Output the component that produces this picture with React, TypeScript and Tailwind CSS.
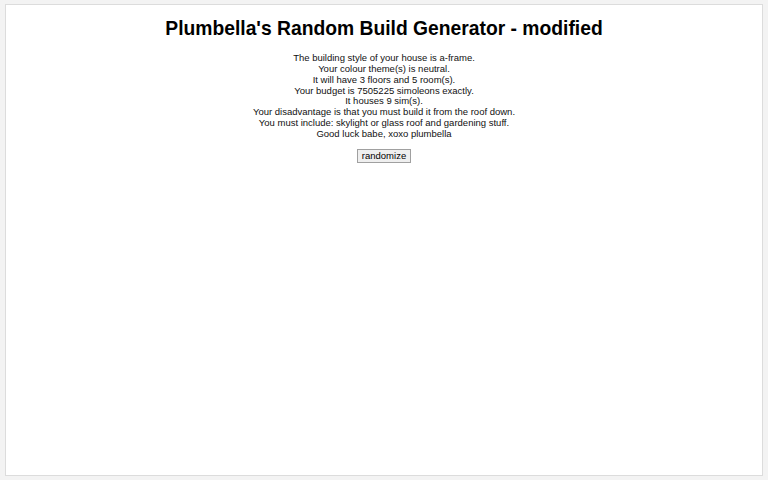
export default function App() {
  const lines = [
    'The building style of your house is a-frame.',
    'Your colour theme(s) is neutral.',
    'It will have 3 floors and 5 room(s).',
    'Your budget is 7505225 simoleons exactly.',
    'It houses 9 sim(s).',
    'Your disadvantage is that you must build it from the roof down.',
    'You must include: skylight or glass roof and gardening stuff.',
    'Good luck babe, xoxo plumbella',
  ]
  return (
    <div className="h-[480px] w-[768px] bg-[#f3f3f3] p-[4px_5px_4px_5px] font-['Liberation_Sans',Arial,sans-serif] text-black">
      <div className="flex h-[472px] flex-col items-center border border-[#dcdcdc] bg-white">
        <h1 className="mt-[12px] text-[19.3px] font-bold leading-[24px]">Plumbella's Random Build Generator - modified</h1>
        <div className="mt-[12px] text-center text-[9.5px] leading-[10.85px] text-[#111]">
          {lines.map((l) => (
            <div key={l}>{l}</div>
          ))}
        </div>
        <button className="mt-[9px] border border-[#a0a0a0] bg-[#efefef] px-[4px] text-[9.5px] leading-[12px]">randomize</button>
      </div>
    </div>
  )
}
